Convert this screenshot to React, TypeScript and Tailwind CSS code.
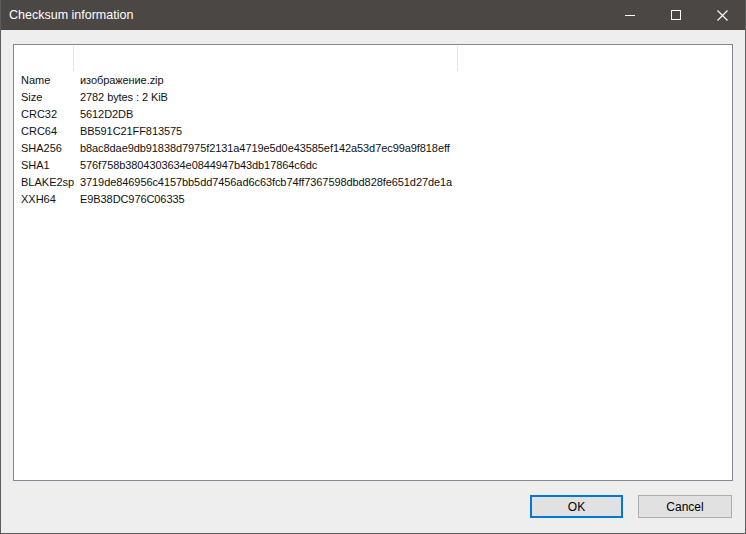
const rows: [string, string][] = [
  ["Name", "изображение.zip"],
  ["Size", "2782 bytes : 2 KiB"],
  ["CRC32", "5612D2DB"],
  ["CRC64", "BB591C21FF813575"],
  ["SHA256", "b8ac8dae9db91838d7975f2131a4719e5d0e43585ef142a53d7ec99a9f818eff"],
  ["SHA1", "576f758b3804303634e0844947b43db17864c6dc"],
  ["BLAKE2sp", "3719de846956c4157bb5dd7456ad6c63fcb74ff7367598dbd828fe651d27de1a"],
  ["XXH64", "E9B38DC976C06335"],
];

function CaptionButtons() {
  return (
    <div className="flex h-full">
      <div className="w-[46px] h-full flex items-center justify-center">
        <svg width="10" height="10" viewBox="0 0 10 10">
          <path d="M0 5.5h10" stroke="#fff" strokeWidth="1" />
        </svg>
      </div>
      <div className="w-[46px] h-full flex items-center justify-center">
        <svg width="10" height="10" viewBox="0 0 10 10">
          <rect x="0.5" y="0.5" width="9" height="9" fill="none" stroke="#fff" strokeWidth="1" />
        </svg>
      </div>
      <div className="w-[46px] h-full flex items-center justify-center">
        <svg width="11" height="11" viewBox="0 0 11 11">
          <path d="M0.5 0.5l10 10M10.5 0.5l-10 10" stroke="#fff" strokeWidth="1.1" />
        </svg>
      </div>
    </div>
  );
}

export default function App() {
  return (
    <div
      className="w-[746px] h-[534px] flex flex-col bg-[#eeeeee] border-x border-b border-[#5c5c5c] text-black"
      style={{ fontFamily: '"Liberation Sans", Arial, sans-serif' }}
    >
      <div className="h-[30px] shrink-0 flex items-center justify-between bg-[#4a4744]">
        <span className="pl-[8px] text-[12.5px] text-white">Checksum information</span>
        <CaptionButtons />
      </div>

      <div className="flex-1 flex flex-col pl-[12px] pr-[12px] pt-[14px] pb-[15px]">
        <div className="flex-1 bg-white border border-[#828790] text-[11px] text-[#111]">
          <div className="flex h-[25px] mt-[1px]">
            <div className="w-[60px] border-r border-[#e5e5e5]" />
            <div className="w-[384px] border-r border-[#e5e5e5]" />
          </div>
          <div className="flex flex-col mt-[1px]">
            {rows.map(([label, value]) => (
              <div key={label} className="flex h-[17px] items-center">
                <span className="w-[60px] pl-[7px]">{label}</span>
                <span className="pl-[6px] whitespace-nowrap tracking-[-0.08px]">{value}</span>
              </div>
            ))}
          </div>
        </div>

        <div className="flex justify-end gap-[15px] mt-[14px] pr-[1px] text-[12px]">
          <button className="w-[93px] h-[23px] bg-[#e1e1e1] border-2 border-[#0078d7]">OK</button>
          <button className="w-[94px] h-[23px] bg-[#e1e1e1] border border-[#adadad]">Cancel</button>
        </div>
      </div>
    </div>
  );
}
